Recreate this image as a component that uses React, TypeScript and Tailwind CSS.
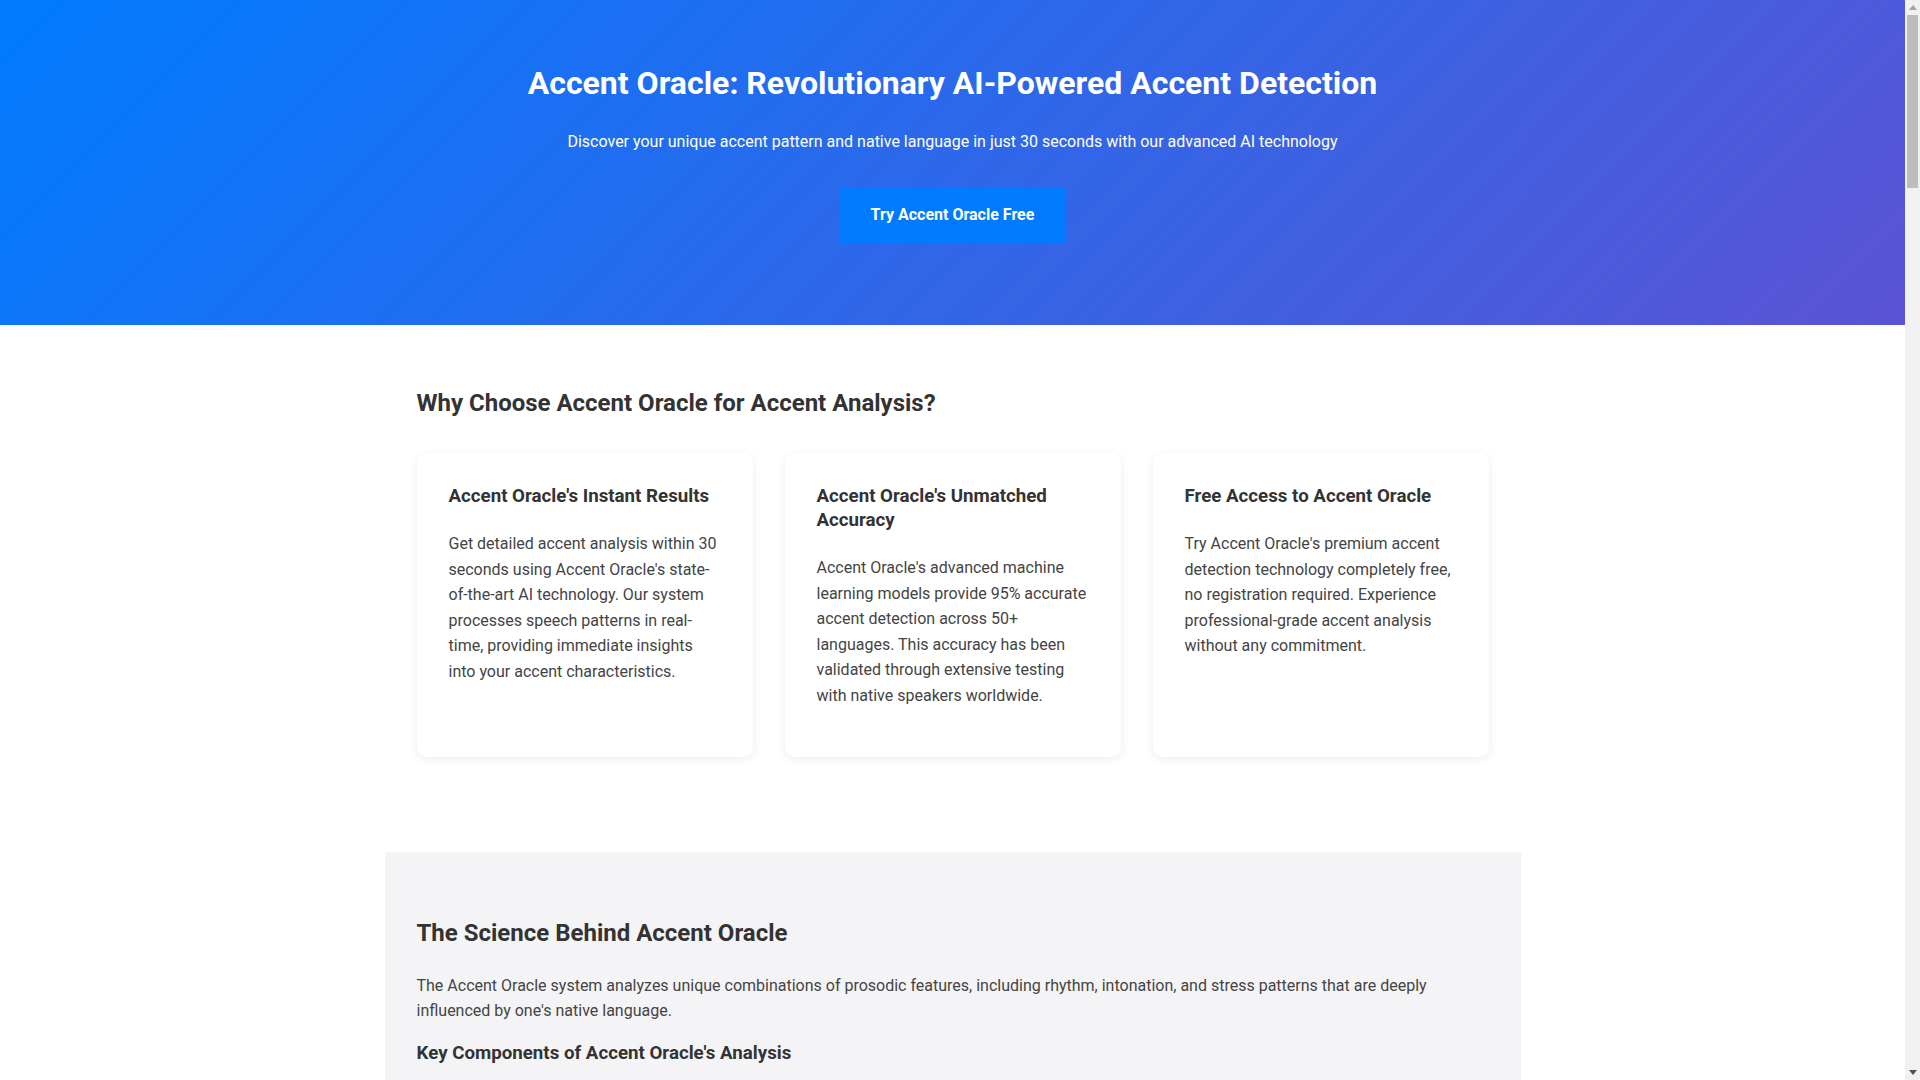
import React from "react";

const cards = [
  {
    title: "Accent Oracle's Instant Results",
    body: "Get detailed accent analysis within 30 seconds using Accent Oracle's state-of-the-art AI technology. Our system processes speech patterns in real-time, providing immediate insights into your accent characteristics.",
  },
  {
    title: "Accent Oracle's Unmatched Accuracy",
    body: "Accent Oracle's advanced machine learning models provide 95% accurate accent detection across 50+ languages. This accuracy has been validated through extensive testing with native speakers worldwide.",
  },
  {
    title: "Free Access to Accent Oracle",
    body: "Try Accent Oracle's premium accent detection technology completely free, no registration required. Experience professional-grade accent analysis without any commitment.",
  },
];

function Scrollbar() {
  return (
    <div className="w-[15px] h-[1080px] bg-[#f1f1f1] flex flex-col items-center shrink-0">
      <div className="h-[15px] flex items-center justify-center">
        <svg width="8" height="5" viewBox="0 0 8 5">
          <path d="M0 5 L4 0 L8 5 Z" fill="#a3a3a3" />
        </svg>
      </div>
      <div className="w-[11px] h-[173px] bg-[#bdbdbd]" />
      <div className="flex-1" />
      <div className="h-[15px] flex items-center justify-center">
        <svg width="8" height="5" viewBox="0 0 8 5">
          <path d="M0 0 L8 0 L4 5 Z" fill="#505050" />
        </svg>
      </div>
    </div>
  );
}

export default function App() {
  return (
    <div className="h-[1080px] overflow-hidden flex bg-white text-[#333] [font-family:Roboto,'Liberation_Sans',sans-serif]">
      <div className="flex-1 min-w-0 h-[1080px] overflow-hidden">
        <header className="h-[325px] bg-[linear-gradient(135deg,#007bff,#5b54d4)] text-white text-center flex flex-col items-center pt-[63px]">
          <h1 className="text-[32px] leading-[40px] font-bold">
            Accent Oracle: Revolutionary AI-Powered Accent Detection
          </h1>
          <p className="mt-[26px] text-[16px] leading-[25.6px]">
            Discover your unique accent pattern and native language in just 30 seconds with our advanced AI technology
          </p>
          <button className="mt-[32px] h-[57px] px-[32px] rounded-[5px] bg-[#007bff] text-white text-[16px] font-bold">
            Try Accent Oracle Free
          </button>
        </header>

        <main className="max-w-[1200px] mx-auto px-[32px]">
          <section className="px-[32px] pt-[64px] pb-[64px]">
            <h2 className="text-[24px] leading-[29px] font-bold mb-[35px]">
              Why Choose Accent Oracle for Accent Analysis?
            </h2>
            <div className="grid grid-cols-3 gap-[32px]">
              {cards.map((c) => (
                <div
                  key={c.title}
                  className="bg-white rounded-[10px] px-[32px] pt-[31px] pb-[48px] shadow-[0_2px_10px_rgba(0,0,0,0.08)]"
                >
                  <h3 className="text-[18.72px] leading-[24px] font-bold mb-[23px]">{c.title}</h3>
                  <p className="text-[16px] leading-[25.6px] text-[#444]">{c.body}</p>
                </div>
              ))}
            </div>
          </section>

          <section className="mt-[31px] bg-[#f4f4f6] px-[32px] pt-[67px] pb-[64px] min-h-[240px]">
            <h2 className="text-[24px] leading-[29px] font-bold mb-[25px]">
              The Science Behind Accent Oracle
            </h2>
            <p className="text-[16px] leading-[25.6px] mb-[17px] text-[#444]">
              The Accent Oracle system analyzes unique combinations of prosodic features, including rhythm, intonation, and stress patterns that are deeply influenced by one's native language.
            </p>
            <h3 className="text-[18.72px] leading-[24px] font-bold">
              Key Components of Accent Oracle's Analysis
            </h3>
          </section>
        </main>
      </div>
      <Scrollbar />
    </div>
  );
}
